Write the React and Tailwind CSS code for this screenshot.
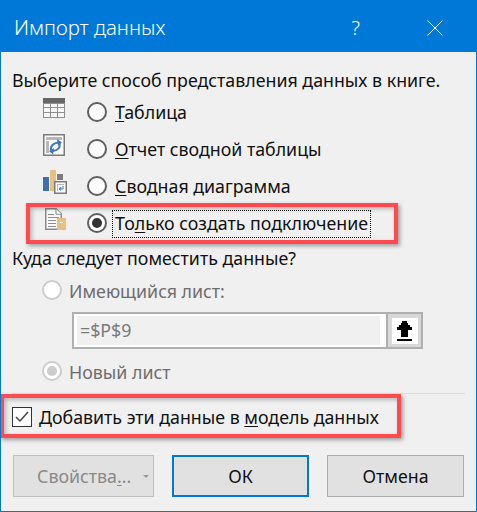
const font = "font-['Noto_Sans','Open_Sans',sans-serif]";

function Radio({ checked, disabled }) {
  return (
    <span
      className={`flex h-[20px] w-[20px] shrink-0 items-center justify-center rounded-full border-2 bg-white ${
        disabled ? "border-[#cccccc]" : "border-[#5f5f5f]"
      }`}
    >
      {checked && (
        <span
          className={`h-[10px] w-[10px] rounded-full ${
            disabled ? "bg-[#cccccc]" : "bg-[#333333]"
          }`}
        />
      )}
    </span>
  );
}

function TableIcon() {
  return (
    <svg width="22" height="20" viewBox="0 0 22 20">
      <rect x="0" y="0" width="22" height="20" fill="#8f8f8f" />
      <rect x="0" y="0" width="22" height="5" fill="#666666" />
      <g fill="#f7f7f7">
        <rect x="1" y="6" width="6" height="3" />
        <rect x="8" y="6" width="6" height="3" />
        <rect x="15" y="6" width="6" height="3" />
        <rect x="1" y="10" width="6" height="4" />
        <rect x="8" y="10" width="6" height="4" />
        <rect x="15" y="10" width="6" height="4" />
        <rect x="1" y="15" width="6" height="4" />
        <rect x="8" y="15" width="6" height="4" />
        <rect x="15" y="15" width="6" height="4" />
      </g>
    </svg>
  );
}

function PivotIcon() {
  return (
    <svg width="22" height="22" viewBox="0 0 22 22">
      <rect x="0.75" y="0.75" width="20.5" height="20.5" fill="#fafafa" stroke="#7b7b7b" strokeWidth="1.5" />
      <rect x="3" y="3" width="16" height="3" fill="#b8b8b8" />
      <rect x="3" y="7" width="3" height="12" fill="#b8b8b8" />
      <path d="M16.500 10c1 3.500-1.500 6.500-7 7" fill="none" stroke="#3f78b5" strokeWidth="2" />
      <path d="M8 16c-.5-3.500 1.500-6.500 7-7.500" fill="none" stroke="#3f78b5" strokeWidth="2" />
      <path d="M14 5l5 3.500-4 3.500zM11 14l-5 3 4 3.500z" fill="#3f78b5" />
    </svg>
  );
}

function ChartIcon() {
  return (
    <svg width="24" height="24" viewBox="0 0 24 24">
      <rect x="0" y="7" width="6" height="14" fill="#3f70ae" />
      <rect x="7" y="0" width="6" height="21" fill="#e6c181" />
      <rect x="14" y="4" width="6" height="6" fill="#7d7d7d" />
      <rect x="11.75" y="11.75" width="11.5" height="11.5" fill="#fafafa" stroke="#7b7b7b" strokeWidth="1.5" />
      <rect x="14" y="14" width="7" height="1" fill="#b8b8b8" />
      <rect x="14" y="14" width="1" height="7" fill="#b8b8b8" />
      <path d="M20 16v3h-3M18.500 18h-2M16 19l2-1.500M16 19l2 1.500" fill="none" stroke="#3f78b5" />
    </svg>
  );
}

function ConnectionIcon() {
  return (
    <svg width="21" height="22" viewBox="0 0 21 22">
      <path d="M0.75 0.75h10.500l5 5v15.500h-15.500z" fill="#fafafa" stroke="#8a8a8a" strokeWidth="1.5" />
      <path d="M11 0.75v5.500h5.500" fill="#ffffff" stroke="#8a8a8a" />
      <g fill="#8c8c8c">
        <rect x="3" y="6" width="6" height="1" />
        <rect x="3" y="9" width="11" height="1" />
        <rect x="3" y="12" width="8" height="1" />
        <rect x="3" y="15" width="8" height="1" />
        <rect x="3" y="18" width="8" height="1" />
      </g>
      <rect x="12" y="10" width="9" height="12" fill="#e6c181" />
      <rect x="15" y="14" width="3" height="1" fill="#ffffff" />
    </svg>
  );
}

function U({ children }) {
  return <span className="underline decoration-1 underline-offset-2">{children}</span>;
}

function OptionRow({ icon, checked, children }) {
  return (
    <div className="flex h-[37px] items-center">
      <div className="mb-[9px] flex w-[86px] shrink-0 pl-[42px]">{icon}</div>
      <div className="mb-[2px]">
        <Radio checked={checked} />
      </div>
      <div className="ml-[8px] text-[17.8px] text-[#111111]">{children}</div>
    </div>
  );
}

function FooterButton({ className, children }) {
  return (
    <button className={`flex h-[42px] items-center text-[17.8px] ${className}`}>
      {children}
    </button>
  );
}

export default function App() {
  return (
    <div className={`${font} relative h-[512px] w-[477px] overflow-hidden border border-[#0078d7] bg-[#f0f0f0]`}>
      <header className="flex h-[51px] items-center justify-between bg-[#0078d7] pl-[13px] pr-[33px] pt-[2px] text-white">
        <span className="text-[20.4px] font-light">Импорт данных</span>
        <div className="flex items-center gap-[67px]">
          <span className="text-[20px] font-light">?</span>
          <svg width="16" height="16" viewBox="0 0 16 16">
            <path d="M0.5 0.5l15 15M15.5 0.5l-15 15" stroke="#ffffff" fill="none" />
          </svg>
        </div>
      </header>

      <p className="mt-[15px] pl-[11px] text-[17.8px] leading-[26px] text-[#111111]">
        Выберите способ представления данных в книге.
      </p>

      <div className="mt-px">
        <OptionRow icon={<TableIcon />}>
          <U>Т</U>аблица
        </OptionRow>
        <OptionRow icon={<PivotIcon />}>
          <U>О</U>тчет сводной таблицы
        </OptionRow>
        <OptionRow icon={<ChartIcon />}>
          <U>С</U>водная диаграмма
        </OptionRow>
        <OptionRow icon={<span className="ml-[2px]"><ConnectionIcon /></span>} checked>
          <span className="-ml-[3px] flex h-[28px] items-center border border-dotted border-black px-[2px]">
            <span>
              То<U>л</U>ько создать подключение
            </span>
          </span>
        </OptionRow>
      </div>

      <p className="mt-[3px] pl-[11px] text-[17.8px] leading-[26px] text-[#111111]">
        Куда следует поместить данные?
      </p>

      <div className="mt-[4px] flex h-[30px] items-center pl-[41px] text-[17.8px] text-[#6d6d6d]">
        <Radio disabled />
        <span className="ml-[7px] pt-[3px]">Имеющийся лист:</span>
      </div>

      <div className="ml-[71px] mt-[7px] flex h-[37px] w-[351px] border-2 border-[#b0b0b0] bg-white">
        <div className="my-[2px] ml-[3px] mr-[6px] flex flex-1 items-center bg-[#f0f0f0] pl-[3px] text-[17.8px] text-[#7a7a7a]">
          =$P$9
        </div>
        <div className="flex w-[35px] items-center justify-center border-l-2 border-[#b0b0b0] bg-[#d8d8d8]">
          <div className="flex h-[26px] w-[26px] items-center justify-center bg-white">
            <svg width="15" height="20" viewBox="0 0 15 20">
              <path d="M5 0h5v2h1v2h2v2h2v3h-4v7h-7v-7h-4v-3h2v-2h2v-2h1z" fill="#000000" />
              <rect x="0" y="18" width="15" height="2" fill="#000000" />
            </svg>
          </div>
        </div>
      </div>

      <div className="mt-[7px] flex h-[30px] items-center pl-[41px] text-[17.8px] text-[#6d6d6d]">
        <Radio checked disabled />
        <span className="ml-[7px] pt-[3px]">Новый лист</span>
      </div>

      <div className="mx-[11px] mt-[7px] h-px bg-[#dcdcdc]" />

      <div className="mt-[13px] flex h-[20px] items-center pl-[11px] text-[17.8px] text-[#111111]">
        <span className="flex h-[20px] w-[20px] items-center justify-center border border-[#333333] bg-white">
          <svg width="14" height="12" viewBox="0 0 14 12">
            <path d="M1 6l4 4 8-9" fill="none" stroke="#444444" strokeWidth="1.5" />
          </svg>
        </span>
        <span className="ml-[7px]">
          Добавить эти данные в <U>м</U>одель данных
        </span>
      </div>

      <div className="mt-[28px] flex pl-[12px]">
        <FooterButton className="w-[141px] border border-[#bfbfbf] bg-[#e1e1e1] pl-[23px] text-[#8a8a8a]">
          <span>
            Свойства<U>.</U>..
          </span>
          <span className="ml-[12px] h-0 w-0 border-x-[3px] border-t-[3px] border-x-transparent border-t-[#9a9a9a]" />
        </FooterButton>
        <FooterButton className="ml-[18px] w-[137px] justify-center border-2 border-[#0078d7] bg-[#e1e1e1] text-[#111111]">
          ОК
        </FooterButton>
        <FooterButton className="ml-[18px] w-[137px] justify-center border border-[#adadad] bg-[#e1e1e1] text-[#111111]">
          Отмена
        </FooterButton>
      </div>

      <div className="absolute left-[25px] top-[202px] h-[41px] w-[372px] border-4 border-[#ff4b4f] shadow-[2px_2px_4px_rgba(0,0,0,0.35),inset_2px_2px_4px_rgba(0,0,0,0.25)]" />
      <div className="absolute left-[-1px] top-[393px] h-[44px] w-[401px] border-4 border-[#ff4b4f] shadow-[2px_2px_4px_rgba(0,0,0,0.35),inset_2px_2px_4px_rgba(0,0,0,0.25)]" />
    </div>
  );
}
